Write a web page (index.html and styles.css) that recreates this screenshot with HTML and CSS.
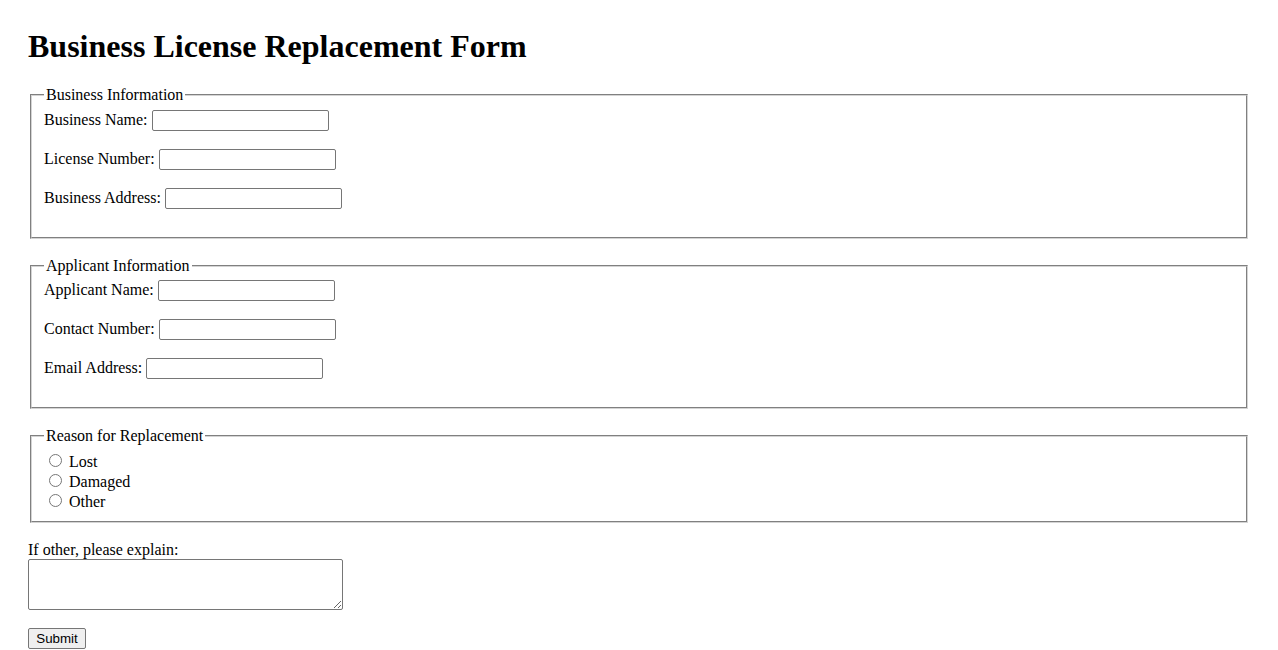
FILE: index.html
```html
<!DOCTYPE html>
<html lang="en">
<head>
<meta charset="utf-8">
<title>Business License Replacement Form</title>
<link rel="stylesheet" href="styles.css">
</head>
<body>
<h1 class="title">Business License Replacement Form</h1>
<form class="form">
  <fieldset class="group">
    <legend class="legend">Business Information</legend>
    <div class="row"><label class="label" for="bname">Business Name:</label> <input class="field" type="text" id="bname"></div>
    <div class="row"><label class="label" for="lnum">License Number:</label> <input class="field" type="text" id="lnum"></div>
    <div class="row"><label class="label" for="baddr">Business Address:</label> <input class="field" type="text" id="baddr"></div>
  </fieldset>
  <fieldset class="group">
    <legend class="legend">Applicant Information</legend>
    <div class="row"><label class="label" for="aname">Applicant Name:</label> <input class="field" type="text" id="aname"></div>
    <div class="row"><label class="label" for="cnum">Contact Number:</label> <input class="field" type="text" id="cnum"></div>
    <div class="row"><label class="label" for="email">Email Address:</label> <input class="field" type="text" id="email"></div>
  </fieldset>
  <fieldset class="group group-radio">
    <legend class="legend">Reason for Replacement</legend>
    <div class="radio-row"><input class="radio" type="radio" name="reason" id="lost"> <label for="lost">Lost</label></div>
    <div class="radio-row"><input class="radio" type="radio" name="reason" id="damaged"> <label for="damaged">Damaged</label></div>
    <div class="radio-row"><input class="radio" type="radio" name="reason" id="other"> <label for="other">Other</label></div>
  </fieldset>
  <label class="explain-label" for="explain">If other, please explain:</label>
  <textarea class="explain" id="explain"></textarea>
  <button class="submit" type="submit">Submit</button>
</form>
</body>
</html>
```

FILE: styles.css
```css
html, body {
  background: #ffffff;
}
body {
  margin: 8px;
  padding: 20px;
  font-family: "Liberation Serif", "Times New Roman", serif;
  font-size: 16px;
  color: #000000;
}
.title {
  font-size: 32px;
  font-weight: bold;
  margin: 0 0 21px 0;
  line-height: 37px;
}
.form {
  margin: 0;
}
.group {
  margin: 0 2px 18px 2px;
  padding: 5.6px 12px 10px 12px;
  border: 2px groove #d4d4d4;
  min-inline-size: min-content;
}
.legend {
  padding: 0 2px;
  line-height: 18px;
}
.row {
  margin-bottom: 18px;
  line-height: 20px;
  height: 21px;
}
.label {
  font-size: 16px;
}
.field {
  box-sizing: border-box;
  width: 177px;
  height: 21px;
  font-family: "Liberation Sans", Arial, sans-serif;
  font-size: 13.33px;
  border: 1px solid #767676;
  border-radius: 2px;
  padding: 1px 2px;
  margin: 0;
  vertical-align: top;
}
.radio-row {
  height: 20px;
  line-height: 20px;
}
.radio {
  margin: 3px 3px 0 5px;
  width: 13px;
  height: 13px;
}
.explain-label {
  display: block;
  line-height: 18px;
  margin: 0;
}
.explain {
  display: block;
  box-sizing: border-box;
  width: 315px;
  height: 51px;
  margin: 0;
  border: 1px solid #767676;
  border-radius: 2px;
  font-family: "Liberation Mono", monospace;
  font-size: 13.33px;
}
.submit {
  display: block;
  margin-top: 18px;
  box-sizing: border-box;
  width: 58px;
  height: 21px;
  padding: 1px 6px;
  font-family: "Liberation Sans", Arial, sans-serif;
  font-size: 13.33px;
  background: #efefef;
  border: 1px solid #767676;
  border-radius: 2px;
  color: #000000;
}
```
